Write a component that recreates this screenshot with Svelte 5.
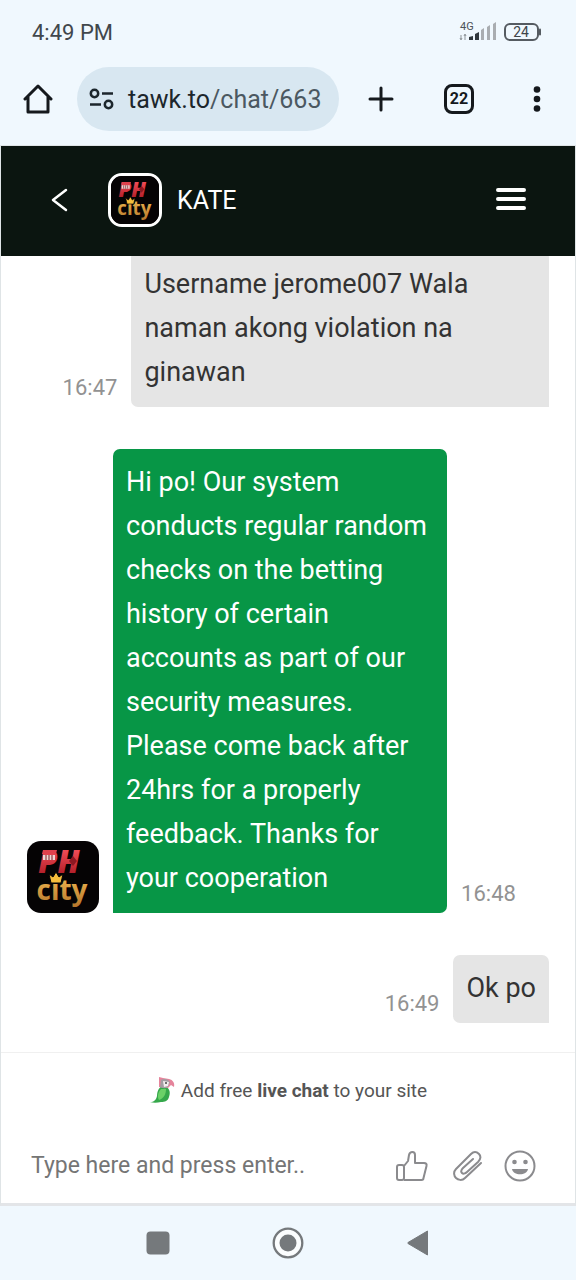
<script lang="ts">
type Message = {
  from: 'visitor' | 'agent';
  text: string;
  time: string;
};

const messages: Message[] = [
  {
    from: 'visitor',
    text: 'Username jerome007 Wala naman akong violation na ginawan',
    time: '16:47',
  },
  {
    from: 'agent',
    text: 'Hi po! Our system conducts regular random checks on the betting history of certain accounts as part of our security measures. Please come back after 24hrs for a properly feedback. Thanks for your cooperation',
    time: '16:48',
  },
  { from: 'visitor', text: 'Ok po', time: '16:49' },
];

let draft = $state('');
</script>

{#snippet logo()}
  <svg class="logo" viewBox="0 0 72 72" role="img" aria-label="PH city">
    <defs>
      <linearGradient id="logo-red" gradientUnits="userSpaceOnUse" x1="0" y1="10" x2="0" y2="32">
        <stop offset="0" stop-color="#ee4a55" />
        <stop offset="1" stop-color="#b3202b" />
      </linearGradient>
      <linearGradient id="logo-gold" gradientUnits="userSpaceOnUse" x1="0" y1="38" x2="0" y2="66">
        <stop offset="0" stop-color="#eab04c" />
        <stop offset="1" stop-color="#b5762c" />
      </linearGradient>
    </defs>
    <rect width="72" height="72" fill="#050304" />
    <text class="logo-text" text-anchor="middle">
      <tspan class="logo-ph" x="34" y="32">PH</tspan>
      <tspan class="logo-city" x="35" y="59">city</tspan>
    </text>
    <path d="M16 9h14l-1 4H15z" fill="#e0424d" />
    <path d="M16 14h12v5H16z" fill="#f0d5d3" />
    <path d="M19 14v5M22 14v5M25 14v5" stroke="#7c2027" stroke-width="1" />
    <path d="M46 15l4 5-4 5-4-5z" fill="#8d1822" />
    <path d="M22 33l4 3 3-5 3 5 4-3-2 9H24z" fill="#f6bd3c" stroke="#050304" stroke-width="1" />
  </svg>
{/snippet}

<div class="screen">
  <div class="status-bar">
    <span class="clock">4:49 PM</span>
    <div class="indicators">
      <svg width="38" height="24" viewBox="0 0 38 24" role="img" aria-label="4G signal">
        <text x="1" y="10" font-size="11" fill="#4c5359">4G</text>
        <path d="M2 15v4M1 18l1 2 1-2M6 20v-5M5 16l1-2 1 2" fill="none" stroke="#8d9499" stroke-width="1" />
        <path d="M10 20v-3l4-1v4zM16 20v-6l4-2v8z" fill="#32383d" />
        <path d="M22 20V10l3-2v12zM28 20V7l3-2v15zM34 20V4l3-2v18z" fill="#a9adb1" />
      </svg>
      <svg width="38" height="18" viewBox="0 0 38 18" role="img" aria-label="Battery 24 percent">
        <rect x="1" y="1" width="33" height="16" rx="5" fill="none" stroke="#555b61" stroke-width="2" />
        <path d="M36 6.500v5" stroke="#555b61" stroke-width="2" stroke-linecap="round" />
        <text x="17" y="14" font-size="14" text-anchor="middle" fill="#3f454a">24</text>
      </svg>
    </div>
  </div>

  <div class="toolbar">
    <button class="home" aria-label="Home">
      <svg width="30" height="30" viewBox="0 0 30 30" fill="none" stroke="#15191d" stroke-width="3" stroke-linejoin="round" stroke-linecap="round">
        <path d="M2 15L15 2l13 13M5 13v15h20V13" />
      </svg>
    </button>
    <button class="address">
      <svg width="26" height="22" viewBox="0 0 26 22" fill="none" stroke="#1c262c" stroke-width="2.500">
        <circle cx="5.500" cy="5.500" r="3.700" />
        <path d="M13 5.500h11M1 16.500h11" />
        <circle cx="19.500" cy="16.500" r="3.700" />
      </svg>
      <span class="url"><span class="host">tawk.to</span>/chat/663</span>
    </button>
    <button class="tool" aria-label="New tab">
      <svg width="26" height="26" viewBox="0 0 26 26" stroke="#15191d" stroke-width="3" stroke-linecap="round">
        <path d="M13 2v22M2 13h22" />
      </svg>
    </button>
    <button class="tool" aria-label="Open tabs, 22"><span class="tab-count">22</span></button>
    <button class="tool" aria-label="More options">
      <svg width="8" height="26" viewBox="0 0 8 26" fill="#15191d">
        <circle cx="4" cy="3.500" r="3.300" />
        <circle cx="4" cy="13" r="3.300" />
        <circle cx="4" cy="22.500" r="3.300" />
      </svg>
    </button>
  </div>

  <main class="widget">
    <header class="chat-header">
      <button class="back" aria-label="Back">
        <svg width="18" height="24" viewBox="0 0 18 24" fill="none" stroke="#fff" stroke-width="2.500" stroke-linecap="round" stroke-linejoin="round">
          <path d="M15 2L2 12l13 10" />
        </svg>
      </button>
      <span class="avatar small">{@render logo()}</span>
      <h1 class="agent-name">KATE</h1>
      <button class="menu" aria-label="Menu">
        <svg width="32" height="24" viewBox="0 0 32 24" stroke="#fff" stroke-width="4" stroke-linecap="round">
          <path d="M3 2h26M3 11h26M3 20h26" />
        </svg>
      </button>
    </header>

    <div class="messages">
      {#each messages as message}
        <div class="row {message.from}">
          {#if message.from === 'agent'}
            <span class="avatar">{@render logo()}</span>
          {/if}
          <p class="bubble">{message.text}</p>
          <time class="time">{message.time}</time>
        </div>
      {/each}
    </div>

    <footer class="composer">
      <a class="branding" href="#tawk">
        <svg width="26" height="28" viewBox="0 0 26 28">
          <path d="M1 26c4 0 6-2 7-6 0-5 2-9 6-10 6 1 8 5 6 11-1 4-4 5-8 5-4 1-8 1-11 0z" fill="#35a84b" />
          <path d="M12 13c-3 3-4 8-2 11 5-2 7-6 7-11z" fill="#6bd168" />
          <path d="M10 1l4 1 6 1c4 1 6 4 5 8l-3-2-3 3-9-1z" fill="#e5849b" />
          <path d="M12 4c3-2 7-1 9 2l-2 5c-3 2-6 1-8 0z" fill="#a39da3" />
          <path d="M14 5l6 1-1 4-4 1z" fill="#f4eef0" />
          <circle cx="17" cy="7" r="1" fill="#444" />
        </svg>
        <span>Add free <strong>live chat</strong> to your site</span>
      </a>
      <form class="entry" onsubmit={(e) => e.preventDefault()}>
        <input
          type="text"
          placeholder="Type here and press enter.."
          aria-label="Message"
          autocomplete="off"
          bind:value={draft}
        />
        <button type="button" aria-label="Rate this chat">
          <svg width="32" height="34" viewBox="0 -2 32 34" fill="none" stroke="#8b8b8e" stroke-width="2" stroke-linejoin="round">
            <path d="M8 16l4-5 1-6c1-4 6-4 6 0v8h9c2 0 3 1 2.500 3l-3 12c0 1-1 2-2 2H8" />
            <rect x="1" y="15" width="7" height="15" rx="2" />
          </svg>
        </button>
        <button type="button" aria-label="Attach file">
          <svg width="32" height="34" viewBox="0 -2 32 34" fill="none" stroke="#8b8b8e" stroke-width="2" stroke-linecap="round" stroke-linejoin="round">
            <path d="M31 13L15 28c-3 3-7 2-9 0s-3-6 0-9L21 4c3-3 6-2 8 0s2 5-1 8L17 22c-2 2-4 2-5 1s-1-3 1-5l10-9" />
          </svg>
        </button>
        <button type="button" aria-label="Insert emoji">
          <svg width="32" height="34" viewBox="0 -2 32 34" fill="none" stroke="#8b8b8e" stroke-width="2">
            <circle cx="16" cy="16" r="14.500" />
            <circle cx="10.500" cy="12" r="2.300" fill="#8b8b8e" stroke="none" />
            <circle cx="21.500" cy="12" r="2.300" fill="#8b8b8e" stroke="none" />
            <path d="M8 19h16c-1 7-15 7-16 0z" fill="#8b8b8e" stroke="none" />
          </svg>
        </button>
      </form>
    </footer>
  </main>

  <nav class="system-nav" aria-label="System">
    <button aria-label="Recent apps">
      <svg width="32" height="32" viewBox="0 0 32 32">
        <rect x="4.500" y="4.500" width="23" height="23" rx="4" fill="#75797c" />
      </svg>
    </button>
    <button aria-label="Home screen">
      <svg width="32" height="32" viewBox="0 0 32 32">
        <circle cx="16" cy="16" r="14.300" fill="#fbfdfe" stroke="#75797c" stroke-width="2.300" />
        <circle cx="16" cy="16" r="8.500" fill="#75797c" />
      </svg>
    </button>
    <button aria-label="Go back">
      <svg width="32" height="32" viewBox="0 0 32 32">
        <path d="M25.500 4v24L6 16.500q-1-.5 0-1z" fill="#75797c" stroke="#75797c" stroke-linejoin="round" />
      </svg>
    </button>
  </nav>
</div>

<style>
  :global(body) {
    background: #f0f8fe;
  }

  .screen {
    display: flex;
    flex-direction: column;
    height: 100vh;
    font-family: Roboto, 'Liberation Sans', sans-serif;
    background: #f0f8fe;
    color: #333;
  }
  button {
    display: inline-flex;
    align-items: center;
    justify-content: center;
    flex: none;
    padding: 0;
    border: 0;
    background: none;
    color: inherit;
    font-family: inherit;
    cursor: pointer;
  }
  svg {
    display: block;
    flex: none;
  }

  /* Phone status bar and browser toolbar */
  .status-bar {
    display: flex;
    align-items: center;
    justify-content: space-between;
    height: 64px;
    padding: 0 34px 0 32px;
    flex: none;
  }
  .clock {
    font-size: 22px;
    color: #41474c;
  }
  .indicators {
    display: flex;
    align-items: center;
    gap: 7px;
  }
  .toolbar {
    display: flex;
    align-items: center;
    height: 70px;
    padding: 0 0 11px 23px;
    flex: none;
  }
  .home {
    margin-right: 24px;
  }
  .tool {
    width: 78px;
    height: 48px;
  }
  .address {
    flex: 1;
    justify-content: flex-start;
    gap: 13px;
    height: 64px;
    margin-right: 3px;
    padding: 0 12px;
    border-radius: 32px;
    background: #d8e7f1;
    overflow: hidden;
  }
  .url {
    font-size: 25px;
    color: #4b5861;
    white-space: nowrap;
  }
  .host {
    color: #1c262c;
  }
  .tab-count {
    box-sizing: border-box;
    width: 30px;
    height: 30px;
    border: 3px solid #15191d;
    border-radius: 8px;
    font-size: 16px;
    font-weight: 700;
    line-height: 24px;
    color: #15191d;
  }

  /* Chat widget */
  .widget {
    display: flex;
    flex-direction: column;
    flex: 1;
    min-height: 0;
    border: 1px solid #dfe4e6;
    border-bottom: 3px solid #e3e5e8;
    background: #fff;
  }
  .chat-header {
    display: flex;
    align-items: center;
    flex: none;
    height: 110px;
    padding: 0 48px 2px 50px;
    background: #0b1510;
    color: #fff;
    box-sizing: border-box;
  }
  .back {
    margin-right: 39px;
  }
  .agent-name {
    flex: 1;
    margin: 0 0 0 15px;
    font-size: 25px;
    font-weight: 400;
  }
  .avatar {
    flex: none;
    width: 72px;
    height: 72px;
    border-radius: 14px;
    overflow: hidden;
  }
  .avatar.small {
    width: 48px;
    height: 48px;
    border: 3px solid #fff;
    background: #050304;
  }
  .logo {
    width: 100%;
    height: 100%;
  }
  .logo-text {
    font-family: 'Open Sans', Roboto, sans-serif;
  }
  .logo-ph {
    font-size: 31px;
    font-style: italic;
    font-weight: 800;
    fill: url(#logo-red);
  }
  .logo-city {
    font-size: 28px;
    font-weight: 700;
    fill: url(#logo-gold);
  }

  .messages {
    display: flex;
    flex-direction: column;
    justify-content: flex-end;
    flex: 1;
    gap: 42px;
    min-height: 0;
    padding: 0 26px 29px;
    overflow: hidden;
  }
  .row {
    display: flex;
    align-items: flex-end;
    gap: 14px;
  }
  .row.visitor {
    flex-direction: row-reverse;
  }
  .bubble {
    box-sizing: border-box;
    max-width: 80%;
    margin: 0;
    padding: 11px 13px 13px;
    border-radius: 7px 7px 0 7px;
    background: #e5e5e5;
    font-size: 27px;
    line-height: 44px;
  }
  .agent .bubble {
    max-width: 64%;
    border-radius: 7px 7px 7px 0;
    background: #079646;
    color: #fff;
  }
  .time {
    padding-bottom: 6px;
    font-size: 22px;
    line-height: 26px;
    color: #929292;
  }

  .composer {
    flex: none;
    border-top: 1px solid #f0f0f0;
  }
  .branding {
    display: flex;
    align-items: center;
    justify-content: center;
    gap: 6px;
    height: 74px;
    font-size: 19px;
    color: #555;
    text-decoration: none;
  }
  .entry {
    display: flex;
    align-items: center;
    gap: 22px;
    height: 76px;
    padding: 0 39px 0 30px;
  }
  .entry input {
    flex: 1;
    min-width: 0;
    padding: 0;
    border: 0;
    outline: none;
    background: none;
    font-family: inherit;
    font-size: 23px;
    color: #333;
  }
  .entry input::placeholder {
    color: #757575;
    opacity: 1;
  }

  .system-nav {
    display: flex;
    align-items: center;
    justify-content: center;
    gap: 98px;
    height: 74px;
    flex: none;
  }
</style>
